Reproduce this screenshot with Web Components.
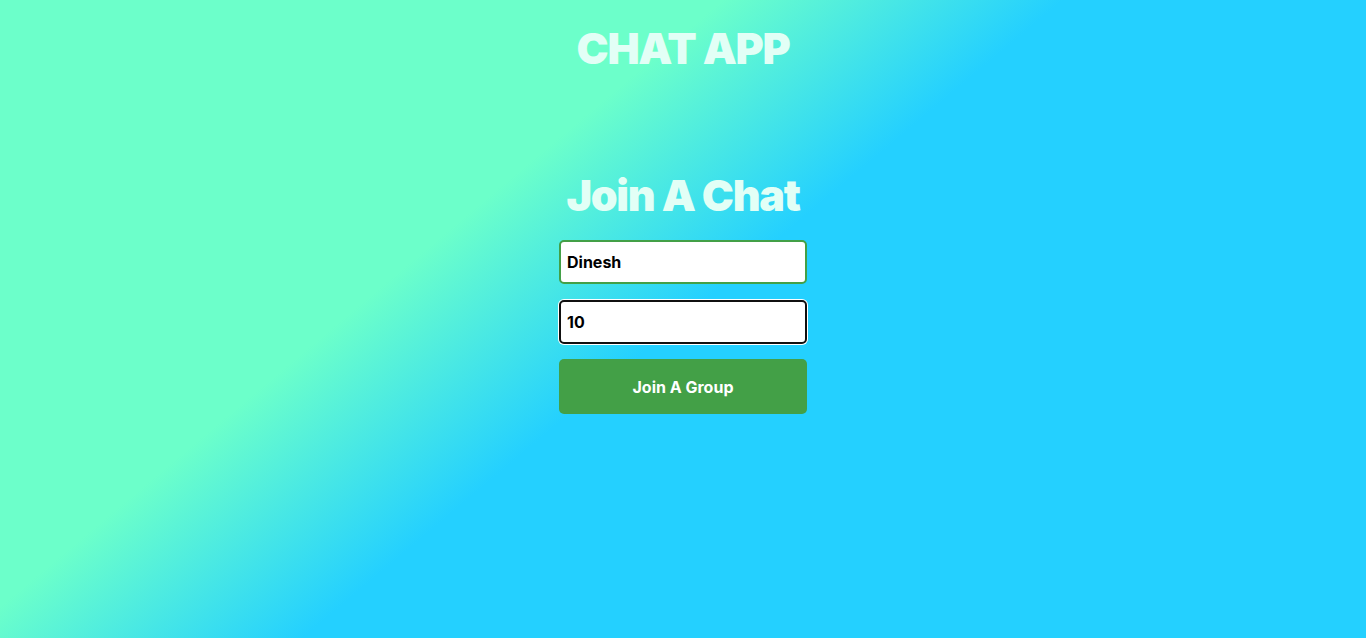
<!DOCTYPE html>
<html>
<head>
<meta charset="utf-8">
<title>Chat App</title>
<style>
  html, body { margin: 0; height: 100%; }
  body { font-family: "Inter", "Liberation Sans", sans-serif; }
</style>
</head>
<body>
<chat-app>
  <span slot="title">CHAT APP</span>
  <join-form heading="Join A Chat" name="Dinesh" room="10" action="Join A Group"></join-form>
</chat-app>

<script>
class ChatApp extends HTMLElement {
    constructor() {
        super();
        this.shadow = this.attachShadow({mode: 'open'})
    }

    connectedCallback() {
        this.shadow.innerHTML = `
        <style>
        :host {
            display: flex;
            flex-direction: column;
            align-items: center;
            height: 638px;
            overflow: hidden;
            background: linear-gradient(140deg, #6cffca 34%, #24d0ff 50%);
        }
        h1 {
            margin: 0;
            padding-top: 21px;
            height: 54px;
            font-size: 43px;
            line-height: 54px;
            font-weight: 900;
            letter-spacing: -1.3px;
            color: #e2fff6;
        }
        </style>
        <h1><slot name="title"></slot></h1>
        <slot></slot>
        `
    }
}

class JoinForm extends HTMLElement {
    constructor() {
        super();
        this.shadow = this.attachShadow({mode: 'open'})
    }

    connectedCallback() {
        this.shadow.innerHTML = `
        <style>
        :host {
            display: flex;
            flex-direction: column;
            width: 248px;
            margin-top: 93px;
        }
        h2 {
            margin: 0 -20px 16px;
            height: 56px;
            font-size: 43px;
            line-height: 54px;
            font-weight: 900;
            letter-spacing: -1.3px;
            text-align: center;
            color: #e2fff6;
        }
        input {
            box-sizing: border-box;
            width: 100%;
            height: 44px;
            margin: 0 0 16px;
            padding: 0 6px;
            border: 2px solid #43a047;
            border-radius: 5px;
            background: #fff;
            color: #000;
            font: 700 16px "Inter", "Liberation Sans", sans-serif;
            outline: none;
        }
        input.focus {
            border-color: #101010;
            box-shadow: 0 0 0 1px #fff;
        }
        button {
            height: 55px;
            margin-top: -1px;
            border: 0;
            border-radius: 5px;
            background: #43a047;
            color: #fff;
            font: 700 16px "Inter", "Liberation Sans", sans-serif;
        }
        </style>
        <h2>${this.getAttribute('heading')}</h2>
        <input type="text" value="${this.getAttribute('name')}">
        <input class="focus" type="text" value="${this.getAttribute('room')}">
        <button>${this.getAttribute('action')}</button>
        `
    }
}

customElements.define('chat-app', ChatApp);
customElements.define('join-form', JoinForm);
</script>
</body>
</html>
